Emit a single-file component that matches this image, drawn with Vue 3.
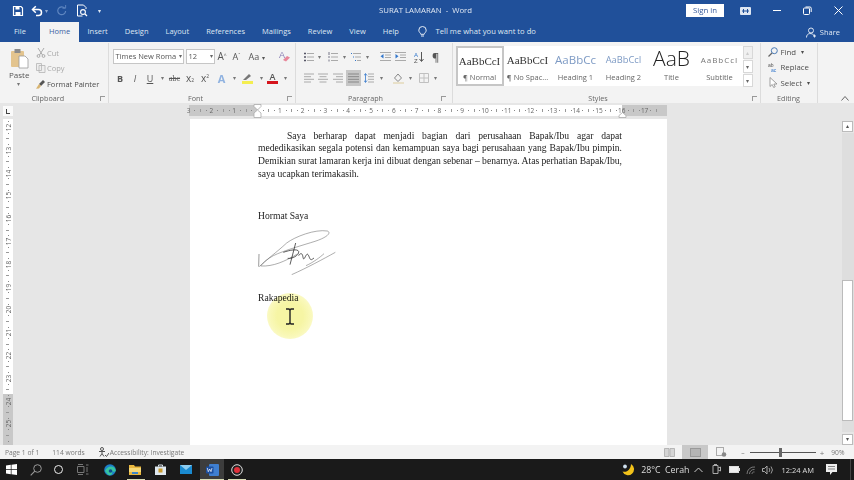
<script setup>
const hMarks = []
for (let q = -12; q <= 70; q++) {
  const v = q / 4
  const x = 68 + v * 22.8
  if (x < -1 || x > 477) continue
  if (q % 4 === 0) { if (q !== 0) hMarks.push({ k: 'n', x, t: Math.abs(v) }) }
  else if (q % 2 === 0) hMarks.push({ k: 't', x })
  else hMarks.push({ k: 'd', x })
}
const vMarks = []
for (let q = 46; q <= 104; q++) {
  const v = q / 4
  const y = 8 + (v - 12) * 22.8
  if (y < 1 || y > 322) continue
  if (q % 4 === 0) vMarks.push({ k: 'n', y, t: v })
  else if (q % 2 === 0) vMarks.push({ k: 't', y })
  else vMarks.push({ k: 'd', y })
}
const tabs = ['Insert', 'Design', 'Layout', 'References', 'Mailings', 'Review', 'View', 'Help']
const styles = [
  { s: 'AaBbCcI', l: '¶ Normal', c: 'normal' },
  { s: 'AaBbCcI', l: '¶ No Spac...', c: 'nospace' },
  { s: 'AaBbCc', l: 'Heading 1', c: 'h1' },
  { s: 'AaBbCcI', l: 'Heading 2', c: 'h2' },
  { s: 'AaB', l: 'Title', c: 'title' },
  { s: 'AaBbCcI', l: 'Subtitle', c: 'sub' }
]
</script>

<template>
  <div class="app">
    <header class="titlebar">
      <div class="qat">
        <svg class="q1" width="12" height="12" viewBox="0 0 12 12"><path d="M1.500 1.500h7.500l1.500 1.500v7.500h-9z" fill="none" stroke="#fff" stroke-width="1.200"/><path d="M3.500 1.500h4v3h-4zM3.500 7h5v3.500h-5z" fill="#fff"/></svg>
        <svg class="q2" width="12" height="12" viewBox="0 0 12 12"><path d="M2 4.500h5.500a3 3 0 0 1 0 6H5" fill="none" stroke="#fff" stroke-width="1.500"/><path d="M4.800 1.200 1.500 4.500l3.300 3.300" fill="none" stroke="#fff" stroke-width="1.500"/></svg>
        <span class="qdrop dim">▾</span>
        <svg class="q3" width="11" height="11" viewBox="0 0 12 12"><path d="M9.500 3.500a4.300 4.300 0 1 0 1 3" fill="none" stroke="#5f86c0" stroke-width="1.300"/><path d="M7 3.500h3.500V0" fill="none" stroke="#5f86c0" stroke-width="1"/></svg>
        <svg class="q4" width="12" height="13" viewBox="0 0 12 13"><path d="M1.500 1h6l2.500 2.500V5M1.500 1v11h5" fill="none" stroke="#fff" stroke-width="1"/><circle cx="7" cy="8" r="2.400" fill="none" stroke="#fff" stroke-width="1.100"/><path d="m9 10 2 2" stroke="#fff" stroke-width="1.300"/></svg>
        <span class="qdrop q5">▾</span>
      </div>
      <div class="doc-title">SURAT LAMARAN &nbsp;-&nbsp; Word</div>
      <div class="win">
        <button class="signin">Sign in</button>
        <svg class="w1" width="11" height="8" viewBox="0 0 11 8"><rect width="11" height="8" rx="1" fill="#dfe7f3"/><path d="M3.500 2v4M7.500 2v4M2 4h7" stroke="#20509a" stroke-width="1"/></svg>
        <svg class="w2" width="9" height="9" viewBox="0 0 9 9"><path d="M0 4.500h8" stroke="#fff"/></svg>
        <svg class="w3" width="9" height="9" viewBox="0 0 9 9"><rect x=".5" y="2" width="6" height="6.500" rx="1" fill="none" stroke="#fff"/><path d="M2.500 1h4.500a1.200 1.200 0 0 1 1.200 1.200V6" fill="none" stroke="#fff"/></svg>
        <svg class="w4" width="9" height="9" viewBox="0 0 9 9"><path d="m.5.500 8 8M8.500.500l-8 8" stroke="#fff"/></svg>
      </div>
    </header>

    <nav class="tabbar">
      <span class="tab file">File</span>
      <span class="tab home">Home</span>
      <span v-for="t in tabs" :key="t" class="tab">{{ t }}</span>
      <svg class="bulb" width="9" height="12" viewBox="0 0 9 12"><path d="M2.800 8.300C2.500 6.800.8 6.200.8 4.200a3.700 3.700 0 0 1 7.400 0c0 2-1.700 2.600-2 4.100zM3 10h3" fill="none" stroke="#e5ecf6"/></svg>
      <span class="tell">Tell me what you want to do</span>
      <span class="share">
        <svg width="10" height="11" viewBox="0 0 10 11"><circle cx="5" cy="3.500" r="2.500" fill="none" stroke="#dfe7f3"/><path d="M.5 10.500c0-5 6-5 8 -1.500M7 9h3M8.500 7.500v3" fill="none" stroke="#dfe7f3"/></svg>
        Share
      </span>
    </nav>

    <section class="ribbon">
      <div class="group clip">
        <div class="body clip-body">
          <div class="paste">
            <svg width="20" height="21" viewBox="0 0 20 21"><rect x="1" y="3" width="13" height="16" rx="1" fill="#e3c48e"/><rect x="4.500" y="1" width="6" height="4" fill="#8b8b8b"/><path d="M9 8h6l3 3v9H9z" fill="#fff" stroke="#9a9a9a" stroke-width=".8"/></svg>
            <span class="pl">Paste</span>
            <span class="drop">▾</span>
          </div>
          <div class="clip-list">
            <div class="cl off"><svg width="10" height="10" viewBox="0 0 10 10"><path d="m2 0 4.500 7M8 0 3.500 7" stroke="#aaa"/><circle cx="2.500" cy="8" r="1.400" fill="none" stroke="#aaa"/><circle cx="7.500" cy="8" r="1.400" fill="none" stroke="#aaa"/></svg>Cut</div>
            <div class="cl off"><svg width="10" height="10" viewBox="0 0 10 10"><path d="M.5.500h5v7h-5zM3 2.500h6v7H3z" fill="#eee" stroke="#b5b5b5" stroke-width=".8"/></svg>Copy</div>
            <div class="cl"><svg width="10" height="10" viewBox="0 0 10 10"><path d="m3 5 4-4 2 2-4 4z" fill="#555"/><path d="m3 5 2 2-2 2.500-3 .2z" fill="#d8b470"/></svg>Format Painter</div>
          </div>
        </div>
        <div class="glabel">Clipboard<i class="launch"></i></div>
      </div>

      <div class="group font">
        <div class="body font-body">
          <div class="frow1">
            <div class="combo fname">Times New Roma<span>▾</span></div>
            <div class="combo fsize">12<span>▾</span></div>
            <span class="g fa1">A<sup>^</sup></span>
            <span class="g fa2">A<sup>ˇ</sup></span>
            <span class="g faa">Aa <em>▾</em></span>
            <svg class="erase" width="12" height="12" viewBox="0 0 12 12"><text x="1" y="8" font-size="9" fill="#8a7fb5" font-family="Liberation Sans">A</text><path d="m5 10 4-4 3 1.500-4 4z" fill="#e8869a"/></svg>
          </div>
          <div class="frow2">
            <b class="fb">B</b><i class="fi">I</i><u class="fu">U</u><em class="dr">▾</em>
            <span class="abc">abc</span><span class="xx">x<small>2</small></span><span class="xx">x<sup>2</sup></span>
            <span class="aeff">A</span><em class="dr">▾</em>
            <span class="hl"><svg width="12" height="8" viewBox="0 0 12 8"><path d="M1 7 7 1l2 2-5 4z" fill="#777"/></svg><i></i></span><em class="dr">▾</em>
            <span class="acol">A<i></i></span><em class="dr">▾</em>
          </div>
        </div>
        <div class="glabel">Font<i class="launch"></i></div>
      </div>

      <div class="group para">
        <div class="body para-body">
          <div class="prow1">
            <svg width="10" height="10" viewBox="0 0 10 10"><path d="M3 1.500h7M3 5h7M3 8.500h7" stroke="#aaa"/><path d="M0 1.500h2M0 5h2M0 8.500h2" stroke="#556" stroke-width="1.600"/></svg><em class="dr">▾</em>
            <svg width="10" height="10" viewBox="0 0 10 10"><path d="M3 1.500h7M3 5h7M3 8.500h7" stroke="#aaa"/><path d="M1 0v3M1 4v2M1 7.500v2" stroke="#778"/></svg><em class="dr">▾</em>
            <svg width="10" height="10" viewBox="0 0 10 10"><path d="M2 1.500h8M4 5h6M6 8.500h4" stroke="#aaa"/><path d="M0 1.500h1M2 5h1M4 8.500h1" stroke="#37c"/></svg><em class="dr">▾</em>
            <i></i>
            <svg width="11" height="9" viewBox="0 0 11 9"><path d="M0 .500h11M5 3h6M5 5.500h6M0 8.500h11" stroke="#aaa"/><path d="M3.500 2 .5 4.200l3 2.300z" fill="#37c"/></svg>
            <i></i>
            <svg width="11" height="9" viewBox="0 0 11 9"><path d="M0 .500h11M5 3h6M5 5.500h6M0 8.500h11" stroke="#aaa"/><path d="M.5 2l3 2.200-3 2.300z" fill="#37c"/></svg>
            <i></i>
            <svg width="10" height="12" viewBox="0 0 10 12"><text x="0" y="5.500" font-size="6" fill="#37c" font-family="Liberation Sans">A</text><text x="0" y="11.500" font-size="6" fill="#555" font-family="Liberation Sans">Z</text><path d="M7.500 1v9M5.500 8l2 2.500L9.500 8" fill="none" stroke="#555"/></svg>
            <i></i>
            <span class="pil">¶</span>
          </div>
          <div class="prow2">
            <svg width="10" height="10" viewBox="0 0 10 10"><path d="M0 1h10M0 3.700h7M0 6.300h10M0 9h7" stroke="#aaa"/></svg>
            <svg width="10" height="10" viewBox="0 0 10 10"><path d="M0 1h10M1.500 3.700h7M0 6.300h10M1.500 9h7" stroke="#aaa"/></svg>
            <svg width="10" height="10" viewBox="0 0 10 10"><path d="M0 1h10M3 3.700h7M0 6.300h10M3 9h7" stroke="#aaa"/></svg>
            <span class="just"><svg width="11" height="10" viewBox="0 0 11 10"><path d="M0 1h11M0 3.700h11M0 6.300h11M0 9h11" stroke="#888"/></svg></span>
            <svg width="10" height="10" viewBox="0 0 10 10"><path d="M4 1h6M4 3.700h6M4 6.300h6M4 9h6" stroke="#aaa"/><path d="M1.500 1v8M0 2.500 1.500 .5l1.500 2M0 7.500l1.500 2 1.500-2" fill="none" stroke="#37c" stroke-width=".8"/></svg>
            <em class="dr">▾</em>
            <i></i>
            <svg width="11" height="11" viewBox="0 0 11 11"><path d="M5 1 1.500 5l3.500 3.500L8.500 5z" fill="none" stroke="#888"/><rect y="9" width="11" height="2" fill="#e8e0c8"/></svg>
            <em class="dr">▾</em>
            <svg width="10" height="10" viewBox="0 0 10 10"><path d="M.5.500h9v9h-9zM5 .5v9M.5 5h9" fill="none" stroke="#c0c0c0"/></svg>
            <em class="dr">▾</em>
          </div>
        </div>
        <div class="glabel">Paragraph<i class="launch"></i></div>
      </div>

      <div class="group styl">
        <div class="gallery">
          <div v-for="s in styles" :key="s.c" class="style" :class="s.c">
            <span class="sample">{{ s.s }}</span>
            <span class="slabel">{{ s.l }}</span>
          </div>
          <div class="gscroll">
            <span class="gs off">▴</span><span class="gs">▾</span><span class="gs">▾</span>
          </div>
        </div>
        <div class="glabel">Styles<i class="launch"></i></div>
      </div>

      <div class="group edit">
        <div class="body edit-body">
          <div class="ed"><svg width="10" height="10" viewBox="0 0 10 10"><circle cx="6.300" cy="3.700" r="3" fill="none" stroke="#4a7ab5"/><path d="m4 6-3.500 3.500" stroke="#666" stroke-width="1.200"/></svg>Find <em>▾</em></div>
          <div class="ed"><svg width="10" height="10" viewBox="0 0 10 10"><text x="0" y="4.500" font-size="5" fill="#555" font-family="Liberation Sans">ab</text><text x="3" y="10" font-size="5" fill="#37c" font-family="Liberation Sans">ac</text></svg>Replace</div>
          <div class="ed"><svg width="10" height="11" viewBox="0 0 10 11"><path d="M2 .500v9l2.200-2 1.500 3 1.500-.8L5.800 7H9z" fill="#fff" stroke="#888" stroke-width=".8"/></svg>Select <em>▾</em></div>
        </div>
        <div class="glabel">Editing</div>
      </div>
      <svg class="collapse" width="8" height="5" viewBox="0 0 8 5"><path d="m.5 4.500 3.500-4 3.500 4" fill="none" stroke="#666"/></svg>
    </section>

    <main class="main">
      <div class="rulerrow">
        <div class="tabsel"><i></i></div>
        <div class="hruler">
          <div class="hr-white"></div>
          <template v-for="(m, i) in hMarks" :key="i">
            <span v-if="m.k === 'n'" class="hnum" :style="{ left: m.x + 'px' }">{{ m.t }}</span>
            <i v-else :class="m.k === 't' ? 'htick' : 'hdot'" :style="{ left: m.x + 'px' }"></i>
          </template>
          <svg class="indent-l" width="9" height="14" viewBox="0 0 9 14"><path d="M1 .5h7v2L4.500 6 1 2.500zM4.500 6 8 9v4.500H1V9z" fill="#fff" stroke="#aaa" stroke-width=".8"/></svg>
          <svg class="indent-r" width="9" height="6" viewBox="0 0 9 6"><path d="M4.500.5 8 3.500v2H1v-2z" fill="#fff" stroke="#aaa" stroke-width=".8"/></svg>
        </div>
      </div>
      <div class="work">
        <div class="vruler">
          <div class="vr-grey"></div>
          <template v-for="(m, i) in vMarks" :key="i">
            <span v-if="m.k === 'n'" class="vnum" :style="{ top: m.y + 'px' }">{{ m.t }}</span>
            <i v-else :class="m.k === 't' ? 'vtick' : 'vdot'" :style="{ top: m.y + 'px' }"></i>
          </template>
        </div>
        <div class="canvas">
          <article class="page">
            <p class="line just-line first">Saya berharap dapat menjadi bagian dari perusahaan Bapak/Ibu agar dapat</p>
            <p class="line just-line">mededikasikan segala potensi dan kemampuan saya bagi perusahaan yang Bapak/Ibu pimpin.</p>
            <p class="line just-line">Demikian surat lamaran kerja ini dibuat dengan sebenar – benarnya. Atas perhatian Bapak/Ibu,</p>
            <p class="line">saya ucapkan terimakasih.</p>
            <p class="line hormat">Hormat Saya</p>
            <svg class="sign" width="78" height="46" viewBox="54 65 234 138" fill="none">
              <path d="M57 140 56 178" stroke="#555" stroke-width="1.800"/>
              <path d="M58 178C75 160 110 135 140 107 165 88 225 65 262 71 275 76 262 90 225 102 190 113 130 130 100 145 85 153 70 165 62 176 100 178 135 162 172 140" stroke="#666" stroke-width="1.600"/>
              <path d="M167 107 150 172M130 135C150 128 172 124 176 132 178 145 155 155 143 153M176 145C180 138 186 136 188 145S190 160 196 148 204 140 208 150 214 158 222 152" stroke="#222" stroke-width="2.200"/>
              <path d="M155 202C200 182 250 155 286 135M198 175C220 165 240 150 252 139" stroke="#666" stroke-width="1.600"/>
            </svg>
            <p class="line raka">Rakapedia</p>
          </article>
          <div class="spot"></div>
          <svg class="ibeam" width="10" height="17" viewBox="0 0 10 17"><path d="M1 1h3l1 1.200L6 1h3M5 2.200v12.600M1 16h3l1-1.200L6 16h3" fill="none" stroke="#222" stroke-width="1.400"/></svg>
        </div>
        <aside class="vscroll">
          <span class="sb-btn">▴</span>
          <div class="sb-track"><div class="sb-thumb"></div></div>
          <span class="sb-btn">▾</span>
        </aside>
      </div>
    </main>

    <footer class="status">
      <span class="s1">Page 1 of 1</span>
      <span class="s2">114 words</span>
      <svg class="s3" width="11" height="10" viewBox="0 0 11 10"><circle cx="4" cy="2" r="1.500" fill="none" stroke="#555"/><path d="M1 4.500h6M4 4.500v2L2 9.500M4 6.500l2 3" fill="none" stroke="#555"/><path d="m7 8 1.500 1.500L11 6" fill="none" stroke="#555"/></svg>
      <span class="s4">Accessibility: Investigate</span>
      <div class="viewbtns">
        <span class="vb"><svg width="11" height="9" viewBox="0 0 11 9"><path d="M.5.500h4.500v8H.5zM6 .5h4.500v8H6z" fill="#d5d5d5" stroke="#aaa" stroke-width=".8"/></svg></span>
        <span class="vb on"><svg width="11" height="9" viewBox="0 0 11 9"><rect x=".5" y=".5" width="10" height="8" fill="#b5b5b5" stroke="#999"/></svg></span>
        <span class="vb"><svg width="11" height="10" viewBox="0 0 11 10"><rect x=".5" y=".5" width="7" height="8" fill="none" stroke="#aaa"/><circle cx="8" cy="7.500" r="2.300" fill="#888"/></svg></span>
      </div>
      <span class="zm">–</span>
      <div class="slider"><i></i></div>
      <span class="zp">+</span>
      <span class="zv">90%</span>
    </footer>

    <footer class="taskbar">
      <svg class="t-win" width="11" height="11" viewBox="0 0 11 11"><path d="M0 1.500 4.800.8v4.300H0zM5.500.7 11 0v5.100H5.500zM0 5.800h4.800v4.400L0 9.500zM5.500 5.800H11V11l-5.500-.8z" fill="#fff"/></svg>
      <svg class="t-search" width="12" height="12" viewBox="0 0 12 12"><circle cx="7.500" cy="4.500" r="3.800" fill="none" stroke="#999"/><path d="M4.800 7.200 .7 11.300" stroke="#999" stroke-width="1.100"/></svg>
      <i class="t-cortana"></i>
      <svg class="t-view" width="12" height="11" viewBox="0 0 12 11"><path d="M.5 2.500h6.500v6H.5zM9 1h2.500M9 10h2.500M10 3v5M1 .5h5M1 10.500h5" fill="none" stroke="#777"/></svg>
      <svg class="t-edge" width="12" height="12" viewBox="0 0 12 12"><circle cx="6" cy="6" r="5.800" fill="#1d7fc9"/><path d="M1 7C3 1 11 1 11.800 6.500c0 1.500-3 1.800-4 .5 2 4-2.500 5-4 3.500" fill="#36c5a0"/><circle cx="6.500" cy="7" r="1.800" fill="#0f4f90"/></svg>
      <svg class="t-exp" width="12" height="10" viewBox="0 0 12 10"><path d="M0 0h5l1 1.500h6V10H0z" fill="#e9b83f"/><rect y="3" width="12" height="4" fill="#f6d978"/><rect x="3" y="7" width="6" height="2" fill="#3c87c9"/></svg>
      <svg class="t-store" width="11" height="11" viewBox="0 0 11 11"><path d="M0 2.500h11V11H0z" fill="#dfe8ef"/><path d="M3.500 2.500V1h4v1.500" fill="none" stroke="#dfe8ef"/><rect x="3.500" y="4.500" width="4" height="4" fill="#c99a2e"/></svg>
      <svg class="t-mail" width="12" height="9" viewBox="0 0 12 9"><rect width="12" height="9" fill="#1a8ad0"/><path d="m0 0 6 5 6-5" fill="#8cccf0"/></svg>
      <span class="t-word"><svg width="13" height="12" viewBox="0 0 13 12"><rect x="3" width="10" height="12" rx="1" fill="#3f7fd0"/><rect y="2.500" width="7.500" height="7" rx=".8" fill="#1c4fa0"/><path d="m1.300 4 1 3.700L3.700 5l1.300 2.700L6 4" fill="none" stroke="#fff" stroke-width=".7"/></svg></span>
      <svg class="t-rec" width="12" height="12" viewBox="0 0 12 12"><circle cx="6" cy="6" r="5.300" fill="#222" stroke="#ddd"/><circle cx="6" cy="6" r="3" fill="#e0303a"/></svg>
      <i class="ul u1"></i><i class="ul u2"></i><i class="ul u3"></i>
      <div class="tray">
        <svg class="moon" width="14" height="14" viewBox="0 0 14 14"><path d="M9 1a6 6 0 1 1-8.500 7.500C5 10 9 6 9 1z" fill="#f2c21a"/><circle cx="3" cy="3.500" r="1.900" fill="#cfe0ee"/></svg>
        <span class="temp">28°C &nbsp;Cerah</span>
        <svg class="tr1" width="9" height="6" viewBox="0 0 9 6"><path d="m.5 5 4-4 4 4" fill="none" stroke="#ccc"/></svg>
        <svg class="tr2" width="9" height="11" viewBox="0 0 9 11"><path d="M1 1.500h5v8H1zM2 .5h3M6 4l2.500-1v4L6 6" fill="none" stroke="#aaa"/></svg>
        <svg class="tr3" width="11" height="7" viewBox="0 0 11 7"><rect x=".5" y=".5" width="9" height="6" fill="#eee" stroke="#ddd"/><rect x="10" y="2" width="1" height="3" fill="#ddd"/></svg>
        <svg class="tr4" width="11" height="10" viewBox="0 0 11 10"><path d="M1 9a7 7 0 0 1 8-7M3.500 9a4.500 4.500 0 0 1 5-4.500M6 9a2 2 0 0 1 2.500-2" fill="none" stroke="#777"/></svg>
        <svg class="tr5" width="11" height="10" viewBox="0 0 11 10"><path d="M.5 3.500h2L5 1v8L2.500 6.500h-2z" fill="none" stroke="#aaa"/><path d="M7 3a3 3 0 0 1 0 4M9 1.500a5.500 5.500 0 0 1 0 7" fill="none" stroke="#999"/></svg>
        <span class="clock">12:24 AM</span>
        <svg class="note" width="11" height="11" viewBox="0 0 11 11"><path d="M0 0h11v8H6.500L4 11V8H0z" fill="#eee"/><path d="M2 2.500h7M2 5h7" stroke="#555" stroke-width=".7"/></svg>
        <i class="deskline"></i>
      </div>
    </footer>
  </div>
</template>

<style>
body { margin: 0; background: #fff; }
</style>

<style scoped>
.app { width: 854px; height: 480px; overflow: hidden; display: flex; flex-direction: column; font-family: "Open Sans", "Noto Sans", sans-serif; font-size: 7.500px; color: #4d4d4d; filter: blur(.35px); }
svg { flex: none; display: block; }
em { font-style: normal; }
.titlebar { height: 21px; flex: none; background: #20509a; color: #dfe7f3; display: flex; align-items: center; position: relative; }
.qat { display: flex; align-items: center; width: 200px; }
.q1 { margin-left: 12px; }
.q2 { margin-left: 7px; }
.qdrop { font-size: 6px; color: #dfe7f3; }
.dim { margin-left: 2px; color: #8fa9d0; }
.q3 { margin-left: 8px; }
.q4 { margin-left: 9px; }
.q5 { margin-left: 10px; }
.doc-title { position: absolute; left: 379px; top: 4px; font-size: 7.800px; line-height: 12px; white-space: nowrap; }
.win { margin-left: auto; display: flex; align-items: center; }
.signin { width: 38px; height: 13px; padding: 0; border: 0; background: #fff; color: #34589a; font: 7.800px/13px "Open Sans", sans-serif; }
.w1 { margin-left: 16px; }
.w2 { margin-left: 22px; }
.w3 { margin-left: 21px; }
.w4 { margin-left: 22px; margin-right: 11px; }

.tabbar { height: 21px; flex: none; background: #20509a; color: #dfe7f3; display: flex; align-items: flex-end; font-size: 7.500px; }
.tab { height: 20px; line-height: 19px; padding: 0 8.500px; white-space: nowrap; }
.tab.file { width: 40px; box-sizing: border-box; padding: 0 0 0 14px; }
.tab.home { width: 39px; box-sizing: border-box; background: #f3f3f3; color: #3a62a5; padding: 0; text-align: center; }
.bulb { margin: 0 8px 4px 11px; }
.tell { height: 20px; line-height: 19px; font-size: 7.650px; }
.share { margin-left: auto; height: 20px; line-height: 19px; display: flex; align-items: center; gap: 4px; padding-right: 14px; }

.ribbon { height: 61px; flex: none; background: #f3f3f3; display: flex; position: relative; }
.group { height: 60px; margin-top: 1px; border-right: 1px solid #dcdcdc; box-sizing: border-box; display: flex; flex-direction: column; flex: none; position: relative; }
.clip { width: 108.500px; }
.font { width: 187px; }
.para { width: 157px; }
.styl { width: 308px; }
.edit { width: 57px; }
.body { flex: 1; min-height: 0; }
.glabel { margin-top: auto; height: 10px; line-height: 10px; text-align: center; color: #666; font-size: 7.200px; flex: none; }
.clip .glabel, .font .glabel { padding-right: 12px; }
.para .glabel, .styl .glabel { padding-right: 16px; }
.launch { position: absolute; right: 3px; top: 53px; width: 4px; height: 4px; border: 1px solid #999; border-width: 1px 0 0 1px; }
.para .launch { right: 6px; }

.clip-body { display: flex; }
.paste { width: 36px; padding: 5px 0 0 10px; box-sizing: border-box; display: flex; flex-direction: column; }
.pl { color: #555; line-height: 11px; margin: 0 0 0 -1px; font-size: 8px; }
.drop { font-size: 6px; line-height: 7px; color: #777; padding-left: 7px; margin-top: 1px; }
.clip-list { padding-top: 2px; }
.cl { height: 15.500px; display: flex; align-items: center; gap: 1px; white-space: nowrap; }
.cl.off { color: #aaa; }

.font-body { padding: 4px 0 0 4px; }
.frow1 { display: flex; align-items: center; height: 18px; }
.combo { height: 15px; background: #fff; border: 1px solid #c6c6c6; box-sizing: border-box; line-height: 13px; padding-left: 2px; display: flex; justify-content: space-between; color: #555; font-size: 7.500px; white-space: nowrap; overflow: hidden; }
.combo span { font-size: 6px; padding-right: 1px; color: #666; }
.fname { width: 71px; }
.fsize { width: 29px; margin-left: 2px; }
.g { font-size: 10px; color: #555; }
.g sup { font-size: 5px; vertical-align: 3px; line-height: 0; }
.fa1 { margin-left: 3px; width: 15px; }
.fa2 { width: 15px; font-size: 9px; }
.faa { width: 30px; padding-left: 1px; box-sizing: border-box; font-size: 9px; }
.faa em { font-size: 6px; }
.frow2 { display: grid; grid-template-columns: 15px 15px 15px 9px 16px 15px 15px 18px 7px 20px 7px 16px 10px; align-items: center; justify-items: center; height: 18px; margin: 4px 0 0 0; color: #555; font-family: "Liberation Serif", serif; font-size: 10px; }
.fb, .fi, .fu { font-family: "Open Sans", sans-serif; font-size: 9px; }
.dr { font-size: 6px; color: #777; font-family: "Open Sans", sans-serif; }
.abc { font-size: 8px; text-decoration: line-through; }
.xx { font-size: 10px; font-family: "Open Sans", sans-serif; }
.xx small, .xx sup { font-size: 5px; line-height: 0; }
.aeff { color: #8fb2e0; font: 700 11px "Open Sans", sans-serif; }
.hl { display: flex; flex-direction: column; align-items: center; }
.hl i { width: 11px; height: 3px; background: #f4ee50; }
.acol { display: flex; flex-direction: column; align-items: center; font: 600 9px/9px "Open Sans", sans-serif; color: #555; }
.acol i { width: 11px; height: 2.500px; background: #d5141c; }

.para-body { padding: 3px 0 0 6px; }
.prow1 { display: grid; grid-template-columns: 14px 8px 18px 6px 16px 8px 7px 13px 2px 13px 6px 12px 8px 6px; align-items: center; justify-items: center; height: 17px; margin-top: 2px; }
.prow2 { display: grid; grid-template-columns: 14px 14px 16px 15px 16px 10px 5px 14px 10px 16px 8px; align-items: center; justify-items: center; height: 16px; margin-top: 5px; }
.pil { font-size: 11px; color: #555; font-weight: 600; }
.just { width: 15px; height: 16px; background: #c6c6c6; display: flex; align-items: center; justify-content: center; }

.gallery { display: flex; height: 40px; margin: 3px 0 0 3px; flex: none; }
.style { width: 48px; height: 40px; background: #fff; box-sizing: border-box; display: flex; flex-direction: column; align-items: center; overflow: hidden; }
.style.normal { border: 2px solid #c6c6c6; }
.sample { height: 26px; line-height: 28px; white-space: nowrap; font-family: "Liberation Serif", serif; font-size: 11px; color: #333; width: 44px; overflow: hidden; text-align: center; flex: none; }
.slabel { line-height: 10px; color: #666; font-size: 7.500px; white-space: nowrap; }
.normal .sample { height: 24px; line-height: 26px; }
.h1 .sample { font: 11.500px/28px "Open Sans", sans-serif; color: #7d9ac4; }
.h2 .sample { font: 9.300px/28px "Open Sans", sans-serif; color: #7d9ac4; }
.title .sample { font: 300 21px/24px "Open Sans", sans-serif; color: #222; overflow: visible; }
.sub .sample { font: 8px/28px "Open Sans", sans-serif; letter-spacing: 1px; color: #777; }
.gscroll { width: 10px; margin-left: -1px; display: flex; flex-direction: column; flex: none; }
.gs { height: 13px; line-height: 12px; font-size: 6px; text-align: center; background: #fff; border: 1px solid #d8d8d8; box-sizing: border-box; margin-bottom: 1px; color: #666; }
.gs.off { color: #ccc; background: #f0f0f0; }

.edit-body { padding: 1px 0 0 7px; }
.ed { height: 15.500px; display: flex; align-items: center; gap: 3px; white-space: nowrap; font-size: 7.800px; }
.ed em { font-size: 6px; margin-left: 2px; }
.collapse { position: absolute; right: 5px; bottom: 2px; }

.main { flex: 1; min-height: 0; background: #e6e6e6; display: flex; flex-direction: column; }
.rulerrow { height: 15px; flex: none; display: flex; align-items: center; margin-bottom: 1px; }
.tabsel { width: 10px; height: 10px; margin-left: 3px; background: #fafafa; position: relative; }
.tabsel i { position: absolute; left: 3px; top: 3px; width: 3px; height: 4px; border: 1px solid #444; border-width: 0 0 1.500px 1.500px; }
.hruler { width: 478px; height: 11px; margin-left: 176px; background: #c8c8c8; position: relative; }
.hr-white { position: absolute; left: 68px; width: 365px; top: 0; bottom: 0; background: #fff; }
.hnum { position: absolute; top: 1px; width: 12px; margin-left: -6px; text-align: center; font-size: 6.500px; line-height: 9px; color: #666; }
.htick { position: absolute; top: 3.500px; width: 1px; height: 3px; background: #999; }
.hdot { position: absolute; top: 5px; width: 1px; height: 1px; background: #888; }
.indent-l { position: absolute; left: 64px; top: -1px; }
.indent-r { position: absolute; left: 429px; top: 7px; }

.work { flex: 1; min-height: 0; display: flex; position: relative; }
.vruler { width: 9.500px; margin-left: 3px; background: #fff; position: relative; flex: none; overflow: hidden; }
.vr-grey { position: absolute; left: 0; right: 0; top: 275px; bottom: 0; background: #c8c8c8; }
.vnum { position: absolute; left: 0; width: 10px; height: 9px; margin-top: -4px; text-align: center; font-size: 6.500px; line-height: 9px; color: #666; transform: rotate(-90deg); }
.vtick { position: absolute; left: 3px; width: 3px; height: 1px; background: #999; }
.vdot { position: absolute; left: 4.500px; width: 1px; height: 1px; background: #888; }
.canvas { flex: 1; min-width: 0; position: relative; }
.page { width: 477px; height: 100%; margin-left: 177.500px; background: #fff; box-sizing: border-box; padding: 10.500px 45px 0 68px; font-family: "Liberation Serif", serif; font-size: 9.600px; color: #222; }
.line { margin: 0; height: 12.700px; line-height: 12.700px; white-space: nowrap; }
.just-line { white-space: normal; text-align: justify; text-align-last: justify; overflow: hidden; }
.first { padding-left: 29px; }
.hormat { margin-top: 29.500px; }
.sign { margin: 6.500px 0 0 0; }
.raka { margin-top: 17.500px; }
.spot { position: absolute; left: 254.500px; top: 174px; width: 46px; height: 46px; border-radius: 50%; mix-blend-mode: multiply; background: radial-gradient(circle, #f6f5a4 0 40%, #f9f8b8 62%, #fcfbd6 82%, rgba(255,255,255,0) 100%); }
.ibeam { position: absolute; left: 272.500px; top: 188.500px; }
.vscroll { width: 12px; display: flex; flex-direction: column; flex: none; }
.sb-btn { height: 11px; width: 11px; margin: 2px 0 0 0; background: #fff; border: 1px solid #bbb; box-sizing: border-box; font-size: 6px; line-height: 9px; text-align: center; color: #555; flex: none; }
.sb-track { flex: 1; background: #dedede; padding-top: 147px; margin-top: 1px; }
.sb-thumb { width: 11px; height: 141px; background: #fff; border: 1px solid #bbb; box-sizing: border-box; }

.status { height: 14px; flex: none; background: #f3f3f3; display: flex; align-items: center; color: #777; font-size: 6.700px; white-space: nowrap; }
.s1 { margin-left: 5px; }
.s2 { margin-left: 13px; }
.s3 { margin-left: 13px; }
.s4 { margin-left: 1px; }
.viewbtns { margin-left: 472px; display: flex; }
.vb { width: 26px; height: 14px; display: flex; align-items: center; justify-content: center; }
.vb.on { background: #c8c8c8; }
.zm { margin-left: 7px; }
.slider { margin-left: 5px; width: 66px; height: 1px; background: #555; position: relative; }
.slider i { position: absolute; left: 29px; top: -4px; width: 3px; height: 9px; background: #666; }
.zp { margin-left: 4px; font-size: 8px; }
.zv { margin-left: 7px; }

.taskbar { height: 21px; flex: none; background: #1a1a1a; display: flex; align-items: center; position: relative; color: #ddd; }
.t-win { margin-left: 6px; }
.t-search { margin-left: 13px; }
.t-cortana { flex: none; width: 7px; height: 7px; border: 1.500px solid #eee; border-radius: 50%; margin-left: 12px; }
.t-view { margin-left: 14px; }
.t-edge { margin-left: 15px; }
.t-exp { margin-left: 13px; }
.t-store { margin-left: 14px; }
.t-mail { margin-left: 14px; }
.t-word { width: 24px; height: 21px; margin-left: 8px; background: #3d3d3d; display: flex; align-items: center; justify-content: center; }
.t-rec { margin-left: 7px; }
.ul { position: absolute; bottom: 0; height: 1.500px; background: #d9ddb5; }
.u1 { left: 127px; width: 18px; }
.u2 { left: 200px; width: 24px; }
.u3 { left: 228px; width: 18px; }
.tray { margin-left: auto; display: flex; align-items: center; }
.moon { margin-right: 5px; }
.temp { font-size: 8.800px; white-space: nowrap; color: #ddd; }
.tr1 { margin-left: 5px; }
.tr2 { margin-left: 9px; }
.tr3 { margin-left: 8px; }
.tr4 { margin-left: 6px; }
.tr5 { margin-left: 5px; }
.clock { margin-left: 8px; font-size: 7.500px; white-space: nowrap; }
.note { margin: 0 13px 0 12px; }
.deskline { width: 1px; height: 21px; background: #444; margin-right: 3px; }
</style>
